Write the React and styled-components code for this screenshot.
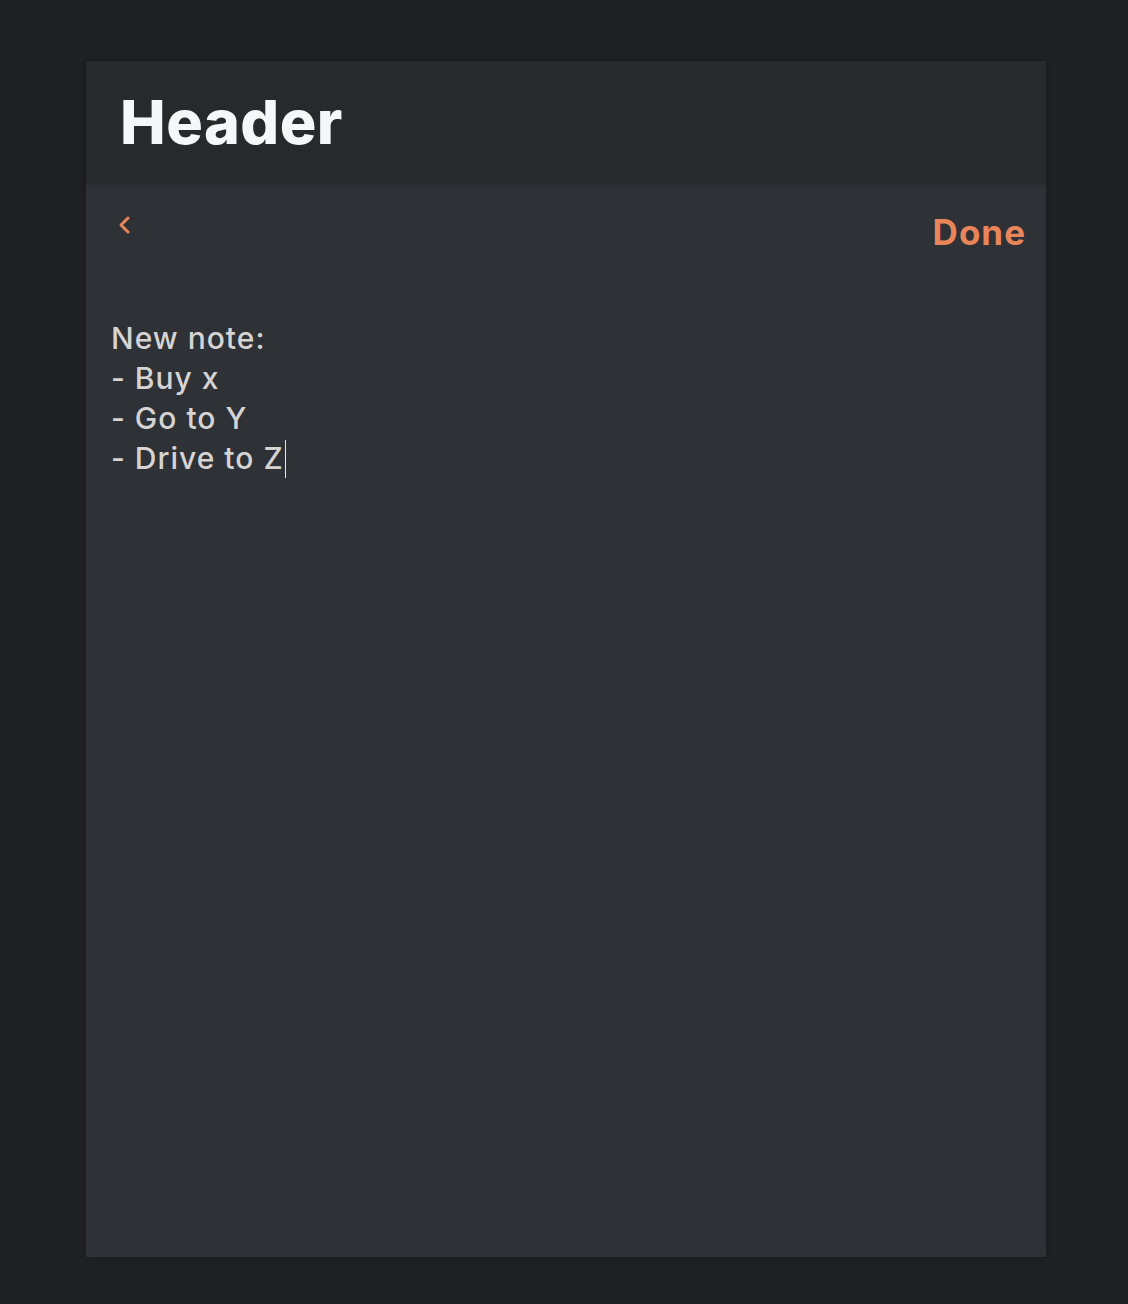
import React from 'react'
import styled, { createGlobalStyle } from 'styled-components';

const GlobalStyle = createGlobalStyle`
    html, body {
        margin: 0;
        padding: 0;
        background: #202124;
    }
    body {
        font-family: Inter, "Noto Sans", sans-serif;
    }
`;

const Page = styled.div`
    width: 1128px;
    height: 1304px;
    padding: 61px 82px 47px 86px;
    box-sizing: border-box;
`;

const Card = styled.div`
    height: 100%;
    display: flex;
    flex-direction: column;
    background-color: #2e3135;
    box-shadow: 0 0 6px rgba(0, 0, 0, 0.25);
`;

const Top = styled.header`
    height: 122px;
    flex-shrink: 0;
    display: flex;
    align-items: center;
    padding: 0 34px;
    background-color: #28292b;
    box-shadow: 0 1px 3px rgba(0, 0, 0, 0.2);
`;

const Title = styled.h1`
    margin: 0;
    color: #f6f7f9;
    font-size: 61px;
    font-weight: 800;
    letter-spacing: 0.5px;
`;

const Toolbar = styled.div`
    display: flex;
    justify-content: space-between;
    align-items: flex-start;
    padding: 30px 20px 0 28px;
`;

const Back = styled.button`
    background: none;
    border: none;
    padding: 0;
    margin-top: 0;
    color: #e8855a;
    cursor: pointer;
    display: flex;
`;

const Done = styled.button`
    background: none;
    border: none;
    padding: 0;
    margin-top: -2px;
    color: #e8855a;
    font-family: inherit;
    font-size: 35px;
    font-weight: 700;
    letter-spacing: 1px;
    cursor: pointer;
`;

const Note = styled.div`
    padding: 65px 25px 0;
    color: #d6d3d3;
    font-size: 30px;
    font-weight: 500;
    line-height: 40px;
    letter-spacing: 1px;
    white-space: pre-line;
`;

const Caret = styled.span`
    display: inline-block;
    width: 1.5px;
    height: 38px;
    margin-left: 1px;
    vertical-align: -9px;
    background-color: #e6e6e6;
`;

const App = () => {
    return (
        <>
            <GlobalStyle />
            <Page>
                <Card>
                    <Top>
                        <Title>Header</Title>
                    </Top>
                    <Toolbar>
                        <Back aria-label="Back">
                            <svg width="22" height="24" viewBox="0 0 22 24" fill="none">
                                <path d="M14 5 L7 12 L14 19" stroke="currentColor" strokeWidth="3" strokeLinecap="round" strokeLinejoin="round" />
                            </svg>
                        </Back>
                        <Done>Done</Done>
                    </Toolbar>
                    <Note>
                        {'New note:\n- Buy x\n- Go to Y\n- Drive to Z'}<Caret />
                    </Note>
                </Card>
            </Page>
        </>
    )
}

export default App
